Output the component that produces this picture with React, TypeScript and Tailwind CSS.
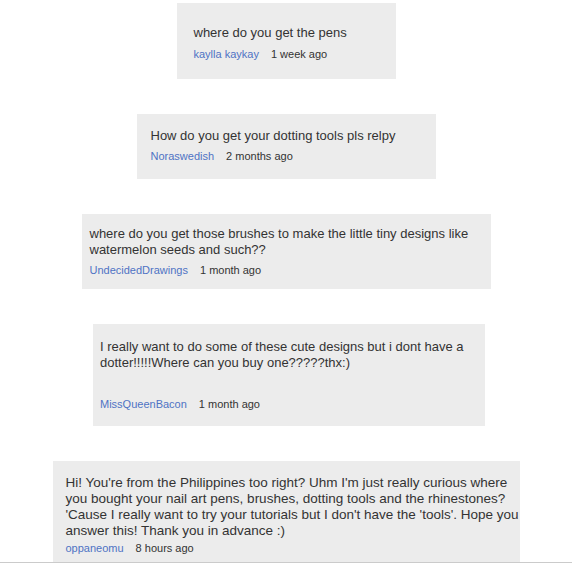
import React from "react";

type Comment = {
  text: React.ReactNode;
  author: string;
  when: string;
  box: string;
  body?: string;
  meta: string;
};

const comments: Comment[] = [
  {
    text: "where do you get the pens",
    author: "kaylla kaykay",
    when: "1 week ago",
    box: "w-[219px] h-[76px] pl-[17px] pt-[22px]",
    meta: "mt-[6px]",
  },
  {
    text: "How do you get your dotting tools pls relpy",
    author: "Noraswedish",
    when: "2 months ago",
    box: "w-[299px] h-[65px] pl-[14px] pt-[14px]",
    meta: "mt-[5px]",
  },
  {
    text: (
      <>
        where do you get those brushes to make the little tiny designs like
        <br />
        watermelon seeds and such??
      </>
    ),
    author: "UndecidedDrawings",
    when: "1 month ago",
    box: "w-[409px] h-[75px] pl-[8px] pt-[12px]",
    meta: "mt-[5px]",
  },
  {
    text: (
      <>
        I really want to do some of these cute designs but i dont have a
        <br />
        dotter!!!!!Where can you buy one?????thx:)
      </>
    ),
    author: "MissQueenBacon",
    when: "1 month ago",
    box: "w-[392px] h-[102px] pl-[7px] pt-[15px] ml-[6px]",
    meta: "mt-[26px]",
  },
];

function CommentBox({ c }: { c: Comment }) {
  return (
    <div className={`bg-[#ececec] text-[#333333] ${c.box}`}>
      <p className={`leading-[16px] ${c.body ?? "text-[13px]"}`}>{c.text}</p>
      <div className={`text-[11px] leading-[14px] ${c.meta}`}>
        <span className="text-[#4f73c4] mr-[12px]">{c.author}</span>
        <span>{c.when}</span>
      </div>
    </div>
  );
}

export default function App() {
  return (
    <div
      className="w-[572px] h-[566px] bg-white overflow-hidden flex flex-col items-center pt-[3px] gap-[35px]"
      style={{ fontFamily: '"Liberation Sans", Arial, sans-serif' }}
    >
      {comments.map((c) => (
        <CommentBox key={c.author} c={c} />
      ))}

      {/* last one sits on the divider line */}
      <div className="w-full flex justify-center border-b border-[#cbcbcb]">
        <CommentBox
          c={{
            text: (
              <>
                Hi! You're from the Philippines too right? Uhm I'm just really curious where
                <br />
                you bought your nail art pens, brushes, dotting tools and the rhinestones?
                <br />
                'Cause I really want to try your tutorials but I don't have the 'tools'. Hope you
                <br />
                answer this! Thank you in advance :)
              </>
            ),
            author: "oppaneomu",
            when: "8 hours ago",
            box: "w-[467px] h-[101px] pl-[13px] pt-[14px]",
            body: "text-[13.5px]",
            meta: "mt-[2px]",
          }}
        />
      </div>
    </div>
  );
}
